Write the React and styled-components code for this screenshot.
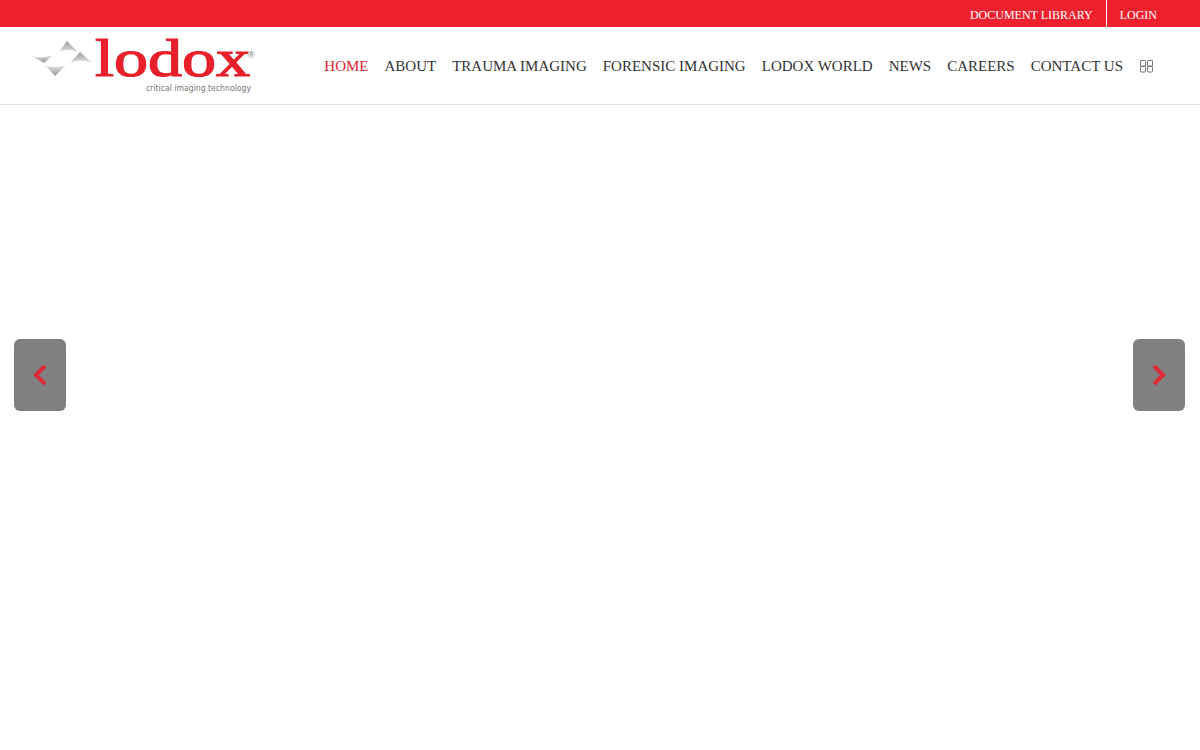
import React from "react";
import styled, { createGlobalStyle } from "styled-components";

const GlobalStyle = createGlobalStyle`
  html, body { margin: 0; padding: 0; background: #fff; }
  body { font-family: "Liberation Serif", "Times New Roman", serif; }
`;

const TopBar = styled.div`
  height: 27px;
  background: #f0212e;
  display: flex;
  justify-content: flex-end;
  padding-right: 30px;
`;

const TopLink = styled.a`
  display: flex;
  align-items: center;
  padding: 3px 13px 0;
  color: #fff;
  font-size: 12px;
  text-decoration: none;
  border-left: ${(p) => (p.$divided ? "1px solid #fff" : "none")};
`;

const Header = styled.header`
  height: 77px;
  border-bottom: 1px solid #e4e4e4;
  display: flex;
  align-items: center;
  justify-content: space-between;
  padding: 0 47px 0 32px;
`;

const Nav = styled.nav`
  display: flex;
  align-items: center;
  gap: 16px;
  margin-top: 1px;
`;

const NavLink = styled.a`
  color: ${(p) => (p.$active ? "#dc2430" : "#333")};
  font-size: 15px;
  text-decoration: none;
  white-space: nowrap;
`;

const LogoSvg = styled.svg`
  display: block;
  overflow: visible;
`;

const Slider = styled.main`
  position: relative;
  height: 645px;
  background: #fff;
`;

const Arrow = styled.button`
  position: absolute;
  top: 234px;
  ${(p) => (p.$side === "left" ? "left: 14px;" : "right: 15px;")}
  width: 52px;
  height: 72px;
  border: 0;
  padding: 0;
  border-radius: 6px;
  background: #808080;
  display: flex;
  align-items: center;
  justify-content: center;
`;

function Logo() {
  return (
    <LogoSvg width="224" height="56" viewBox="0 0 224 56" aria-label="Lodox">
      <defs>
        <linearGradient id="mark" x1="0" y1="0" x2="0" y2="1">
          <stop offset="0" stopColor="#9a9a9a" />
          <stop offset="1" stopColor="#e6e6e6" />
        </linearGradient>
        <linearGradient id="markLow" x1="0" y1="0" x2="0" y2="1">
          <stop offset="0" stopColor="#e8e8e8" />
          <stop offset="1" stopColor="#969696" />
        </linearGradient>
      </defs>
      <path d="M27 14 L35 3 L47 15 Q36 9 27 14 Z" fill="url(#mark)" />
      <path d="M38 25 L48 14 L60 25 Q48 20 38 25 Z" fill="url(#mark)" />
      <path d="M0 18 Q10 21 21 17 L12 25 Z" fill="url(#markLow)" />
      <path d="M13 27 Q24 31 34 27 L23 38 Z" fill="url(#markLow)" />
      <text
        x="63"
        y="38"
        textLength="155"
        lengthAdjust="spacingAndGlyphs"
        fontFamily="'Liberation Serif', serif"
        fontSize="52"
        stroke="#e8202c"
        strokeWidth="1.2"
        fill="#e8202c"
      >
        lodox
      </text>
      <text x="216" y="20" fontFamily="'Liberation Sans', sans-serif" fontSize="9" fill="#777">
        ®
      </text>
      <text
        x="114"
        y="53"
        fontFamily="'DejaVu Sans', sans-serif"
        fontSize="8.5"
        fill="#777"
        textLength="105"
        lengthAdjust="spacingAndGlyphs"
      >
        critical imaging technology
      </text>
    </LogoSvg>
  );
}

function GridIcon() {
  return (
    <svg width="14" height="13" viewBox="0 0 14 13" fill="none" stroke="#777" strokeWidth="1">
      <rect x="1.5" y="0.5" width="5" height="5.5" rx="0.5" />
      <rect x="8.5" y="0.5" width="5" height="5.5" rx="0.5" />
      <rect x="1.5" y="6.5" width="5" height="5.5" rx="0.5" />
      <rect x="8.5" y="6.5" width="5" height="5.5" rx="0.5" />
    </svg>
  );
}

function Chevron({ dir }) {
  return (
    <svg width="16" height="22" viewBox="0 0 16 22" fill="none" stroke="#dc2a37" strokeWidth="4">
      <path d={dir === "left" ? "M13 2 L4 11 L13 20" : "M3 2 L12 11 L3 20"} />
    </svg>
  );
}

const links = ["ABOUT", "TRAUMA IMAGING", "FORENSIC IMAGING", "LODOX WORLD", "NEWS", "CAREERS", "CONTACT US"];

export default function App() {
  return (
    <>
      <GlobalStyle />
      <TopBar>
        <TopLink href="#">DOCUMENT LIBRARY</TopLink>
        <TopLink href="#" $divided>LOGIN</TopLink>
      </TopBar>
      <Header>
        <Logo />
        <Nav>
          <NavLink href="#" $active>HOME</NavLink>
          {links.map((l) => (
            <NavLink href="#" key={l}>{l}</NavLink>
          ))}
          <GridIcon />
        </Nav>
      </Header>
      <Slider>
        <Arrow $side="left" aria-label="Previous"><Chevron dir="left" /></Arrow>
        <Arrow $side="right" aria-label="Next"><Chevron dir="right" /></Arrow>
      </Slider>
    </>
  );
}
